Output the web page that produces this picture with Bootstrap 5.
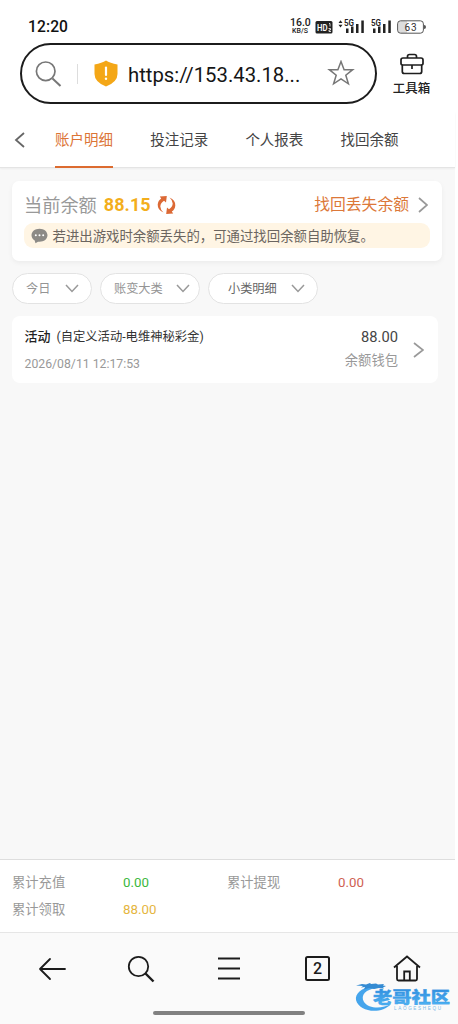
<!DOCTYPE html>
<html lang="zh-CN">
<head>
<meta charset="utf-8">
<meta name="viewport" content="width=device-width, initial-scale=1">
<title>账户明细</title>
<link href="https://cdn.jsdelivr.net/npm/bootstrap@5.3.0/dist/css/bootstrap.min.css" rel="stylesheet">
<style>
body{font-family:Roboto,"Noto Sans CJK SC",sans-serif;background:#fff;color:#333;line-height:1;overflow:hidden}
svg{display:block;flex:none;fill:none}
.phone{width:458px;height:1024px}
.status{height:43px;padding:10px 32px 0 28px;color:#222}
.clock{font-size:15.6px;font-weight:500;letter-spacing:.1px;color:#111;padding-top:2px}
.rate{width:20px;color:#222;font-weight:500;text-align:center;white-space:nowrap;margin-right:4px}
.browser-bar{height:69px;padding-left:20px}
.address{width:357px;height:61px;border:2px solid #1c1c1c;border-radius:31px;padding-left:13px}
.sep{width:1px;height:20px;background:#ddd;margin:0 16px 0 14px}
.url{font-size:20.3px;color:#151515;width:174px;white-space:nowrap;margin-left:10px;padding-top:3px}
.tools{width:69px;font-size:12.5px;font-weight:500;color:#222;padding-top:10px}
.app{width:455px}
.tabs{height:56px;border-bottom:1px solid #e4e4e4;box-shadow:0 1px 2px #0000000d;background:#fff;position:relative}
.tabs a{width:58px;height:56px;line-height:57px;margin-right:37.2px;font-size:14.5px;color:#444;text-decoration:none;white-space:nowrap}
.tabs a.active{color:#dc7436;border-bottom:2px solid #dc6b2f}
.content{height:691px;background:#f8f8f8;padding:13px 0 0 12px}
.balance{width:430px;height:80px;border-radius:7px;background:#fff;box-shadow:0 2px 5px #0000000d;padding:12px 12px 0 12px}
.balance-row{height:24px}
.amount{font-size:18px;font-weight:700;color:#f3ae1c;letter-spacing:.1px}
.notice{height:25px;border-radius:9px;background:#fff5e4;color:#6b6560;font-size:13.4px;margin-top:6px;padding-left:7px;white-space:nowrap}
.notice span{margin-left:4.5px;padding-top:3px}
.pill{height:31px;border:1px solid #e3e3e3;border-radius:16px;background:#fff;color:#949494;font-size:12.2px;padding:0 12px 0 13px}
.pill span{padding-top:1px}
.record{width:426px;height:67px;border-radius:8px;background:#fff;padding:2px 14px 0 12.5px;margin-top:12px}
.totals{height:73px;border-top:1px solid #dedede;font-size:13.3px;color:#999;padding:9px 0 0 12px}
.totals>div{height:27px}
.totals span{flex:none}
.bottom{height:92px;background:#fafafa;border-top:1px solid #e6e6e6}
.icons{height:71px}
.homebar{width:152px;height:4px;border-radius:2px;background:#818181;margin:7px 0 0 153px}
.stamp{position:absolute;left:354px;top:980px}
</style>
</head>
<body>
<div class="phone d-flex flex-column position-relative">
  <header class="status d-flex align-items-center">
    <span class="clock">12:20</span>
    <div class="rate ms-auto"><div style="font-size:10.500px;line-height:9px">16.0</div><div style="font-size:7px;line-height:7px;margin-top:1px">KB/S</div></div>
    <svg width="112" height="22" viewBox="314 16 112 22">
      <g fill="#222" font-family="Roboto,sans-serif">
      <rect x="315.5" y="21" width="17" height="12.500" rx="1.5"/>
      <text x="317" y="31" font-size="9.5" font-weight="600" fill="#fff" textLength="10.5" lengthAdjust="spacingAndGlyphs">HD</text>
      <path d="M329 23.500h1v3M328.500 28.500h2v1.500h-1.500v1.500h2" stroke="#fff" stroke-width=".8" fill="none"/>
      <path d="M338.500 23l2-2.800 2 2.800zM338.500 24.800l2 2.800 2-2.800z"/>
      <text x="344" y="25.800" font-size="9" font-weight="600" textLength="10" lengthAdjust="spacingAndGlyphs">5G</text>
      <path d="M346 28.500h2.500v4.500H346zM351 26.500h2.500v6.500H351zM356 24h2.500v9H356zM361.300 20.500h2.500V33h-2.500z"/>
      <text x="371" y="25.800" font-size="9" font-weight="600" textLength="10" lengthAdjust="spacingAndGlyphs">5G</text>
      <path d="M373 28.500h2.500v4.500H373zM378 26.500h2.500v6.500H378zM383 24h2.500v9H383zM388.300 20.500h2.500V33h-2.500z"/>
      <path d="M401 21h6v12h-6q-3 0-3-3v-6q0-3 3-3" fill="#ddd"/>
      <rect x="397.600" y="20.800" width="25.800" height="12.400" rx="3" fill="none" stroke="#555"/>
      <path d="M424 25q2 0 2 2t-2 2z" fill="#555"/>
      <text x="404.500" y="30.700" font-size="10" fill="#333" textLength="12">63</text>
      </g>
    </svg>
  </header>
  <div class="browser-bar d-flex">
    <div class="address d-flex align-items-center">
      <svg width="28" height="28" viewBox="0 0 28 28" stroke="#777" stroke-width="1.700"><circle cx="10.700" cy="11.300" r="9.300"/><path d="M17.500 18.500L25.500 26" stroke-width="2"/></svg>
      <span class="sep"></span>
      <svg width="24" height="27" viewBox="0 0 24 27"><path d="M12 .5Q16 3 23.500 4.500V14q0 8-11.500 12.500Q.5 22 .5 14V4.500Q8 3 12 .5" fill="#f4a717"/><path d="M12 7.500v7.500" stroke="#fff" stroke-width="2.200" stroke-linecap="round"/><circle cx="12" cy="18.700" r="1.200" fill="#fff"/></svg>
      <span class="url">https://153.43.18...</span>
      <svg style="margin-left:25px" width="28" height="27" viewBox="0 0 28 27" stroke="#777" stroke-width="1.500"><path d="M14 1.500l3.100 8.200h8.600l-6.900 5.500 2.600 8.600-7.400-5-7.400 5 2.600-8.600-6.900-5.500h8.600z"/></svg>
    </div>
    <div class="tools d-flex flex-column align-items-center">
      <svg width="24" height="22" viewBox="0 0 24 22" stroke="#1e1e1e" stroke-width="1.700"><path d="M7.500 5V3.500q0-2 2-2h5q2 0 2 2V5M3 5h18q2 0 2 2v3.500q0 1.500-2 1.500H3q-2 0-2-1.500V7q0-2 2-2zM2.300 12v6.500q0 2 2 2h15.400q2 0 2-2V12M12 12V16"/></svg>
      <span style="margin-top:8px">工具箱</span>
    </div>
  </div>
  <main class="app">
    <nav class="tabs d-flex">
      <svg style="margin:20px 30px 0 14px" width="11" height="16" viewBox="0 0 11 16" stroke="#666" stroke-width="1.800"><path d="M10 1L2 8l8 7"/></svg>
      <a href="#" class="active">账户明细</a><a href="#">投注记录</a><a href="#">个人报表</a><a href="#">找回余额</a>
    </nav>
    <div class="content">
      <section class="balance">
        <div class="balance-row d-flex align-items-center">
          <span style="font-size:18.200px;color:#999;padding-top:2px">当前余额</span>
          <span class="amount" style="margin-left:7px">88.15</span>
          <svg style="margin-left:6px" width="19" height="20" viewBox="0 0 19 20"><g fill="#dc6935"><path d="M6.500 17.500Q.5 15 .7 9.500 1 5.500 4.200 3.500L2.800 1.500 9.800 1 9 7.500 7 5.800Q3.500 8 3.300 11.500 3.500 15 6.500 17.500z"/><path d="M12.500 2.500q6 2.500 5.800 8-.3 4-3.500 6l1.400 2-7 .5.800-6.500 2 1.700q3.500-2.200 3.700-5.700Q15.500 5 12.500 2.500z"/></g></svg>
          <span class="ms-auto" style="font-size:15.800px;color:#dc7839">找回丢失余额</span>
          <svg style="margin:0 2px 0 9px" width="10" height="16" viewBox="0 0 10 16" stroke="#999" stroke-width="1.700"><path d="M1 1l8 7-8 7"/></svg>
        </div>
        <div class="notice d-flex align-items-center">
          <svg width="17" height="16" viewBox="0 0 17 16"><path d="M8.500.8c4.500 0 8 2.800 8 6.500s-3.500 6.500-8 6.500H7L4.500 15.300l-.8-2.800C1.800 11.300.5 9.500.5 7.300c0-3.700 3.500-6.500 8-6.500" fill="#8c8a86"/><g fill="#fff"><circle cx="4.800" cy="7.300" r="1"/><circle cx="8.500" cy="7.300" r="1"/><circle cx="12.200" cy="7.300" r="1"/></g></svg>
          <span>若进出游戏时余额丢失的，可通过找回余额自助恢复。</span>
        </div>
      </section>
      <div class="d-flex" style="gap:8px;margin-top:12px">
        <div class="pill d-flex align-items-center justify-content-between" style="width:80px"><span>今日</span><svg width="14" height="9" viewBox="0 0 14 9" stroke="#999" stroke-width="1.500"><path d="M1 1l6 6.500L13 1"/></svg></div>
        <div class="pill d-flex align-items-center justify-content-between" style="width:100px;padding-right:9px"><span>账变大类</span><svg width="14" height="9" viewBox="0 0 14 9" stroke="#999" stroke-width="1.500"><path d="M1 1l6 6.500L13 1"/></svg></div>
        <div class="pill d-flex align-items-center justify-content-between" style="width:110px;padding-left:19px"><span style="color:#666">小类明细</span><svg width="14" height="9" viewBox="0 0 14 9" stroke="#999" stroke-width="1.500"><path d="M1 1l6 6.500L13 1"/></svg></div>
      </div>
      <article class="record d-flex align-items-center">
        <div>
          <div style="font-size:12.300px;color:#333;height:15px;white-space:nowrap"><b style="font-size:13px;font-weight:500;color:#222;margin-right:6px">活动</b>(自定义活动-电维神秘彩金)</div>
          <div style="font-size:12.250px;color:#999;margin-top:13px">2026/08/11 12:17:53</div>
        </div>
        <div class="ms-auto text-end" style="margin-top:-4px">
          <div style="font-size:14.700px;color:#444">88.00</div>
          <div style="font-size:13.300px;color:#999;margin-top:10px">余额钱包</div>
        </div>
        <svg style="margin:-2px 0 0 15px" width="11" height="16" viewBox="0 0 11 16" stroke="#999" stroke-width="1.700"><path d="M1 1l9 7-9 7"/></svg>
      </article>
    </div>
    <section class="totals">
      <div class="d-flex align-items-center"><span style="width:111px">累计充值</span><span style="width:104px;color:#3bb83d">0.00</span><span style="width:111px">累计提现</span><span style="color:#cf5f52">0.00</span></div>
      <div class="d-flex align-items-center"><span style="width:111px">累计领取</span><span style="color:#e5b63f">88.00</span></div>
    </section>
  </main>
  <footer class="bottom">
    <div class="icons d-flex align-items-center" style="padding-left:38px">
      <svg width="28" height="24" viewBox="0 0 28 24" stroke="#1c1c1c" stroke-width="1.800" stroke-linecap="round" stroke-linejoin="round"><path d="M27 12H2M12 2L2 12l10 10"/></svg>
      <svg style="margin-left:61px" width="28" height="28" viewBox="0 0 28 28" stroke="#1c1c1c" stroke-width="1.800"><circle cx="11.500" cy="11.500" r="9.700"/><path d="M18.500 18.500L26.500 26.500" stroke-width="2.400"/></svg>
      <svg style="margin-left:63px" width="22" height="23" viewBox="0 0 22 23" stroke="#1c1c1c" stroke-width="2"><path d="M0 1.500h22M0 11.500h22M0 21.500h22"/></svg>
      <svg style="margin-left:65px" width="25" height="25" viewBox="0 0 25 25"><rect x="1" y="1" width="23" height="23" rx="1.500" stroke="#1c1c1c" stroke-width="2"/><text x="12.500" y="18.200" text-anchor="middle" font-family="Roboto,sans-serif" font-size="16" font-weight="500" fill="#1c1c1c">2</text></svg>
      <svg style="margin-left:63px" width="28" height="27" viewBox="0 0 28 27" stroke="#1c1c1c" stroke-width="1.800"><path d="M1 12.500L14 1.500l13 11M4 11v13q0 1.500 1.500 1.500h17q1.500 0 1.500-1.500V11M11.200 25V16.500h5.600V25"/></svg>
    </div>
    <div class="homebar"></div>
  </footer>
  <svg class="stamp" width="100" height="36" viewBox="354 980 100 36">
    <defs><linearGradient id="sea" x1="0" y1="0" x2="0" y2="1"><stop stop-color="#2b85d8"/><stop offset="1" stop-color="#4fb6f5"/></linearGradient></defs>
    <path d="M372 986C361 988 355 994 356 1000 359 1012 381 1015 391 1004 382 1009 369 1009 364 1002 360 995 366 989 377 988z" fill="#45a5ec"/>
    <path d="M356 985.500l6-1.500 4 .5 4-1.500 1 1 5-.5 2 1 6-.5-1 1.500 3 .5-3 1.500 1 1-5-.5-5 1-5-1-5 1.500 1-2.500-4 .5 2-1.500z" fill="#348bd3"/>
    <text x="373" y="1002.800" font-family="'Noto Sans CJK SC',sans-serif" font-size="15.500" font-weight="900" textLength="77" lengthAdjust="spacingAndGlyphs" fill="url(#sea)" stroke="#3c9de8" stroke-width=".4">老哥社区</text>
    <text x="394" y="1009.800" font-family="'Liberation Sans',sans-serif" font-size="4.600" textLength="47" fill="#7dbbe8">LAOGESHEQU</text>
  </svg>
</div>
<script src="https://cdn.jsdelivr.net/npm/bootstrap@5.3.0/dist/js/bootstrap.bundle.min.js"></script>
</body>
</html>
